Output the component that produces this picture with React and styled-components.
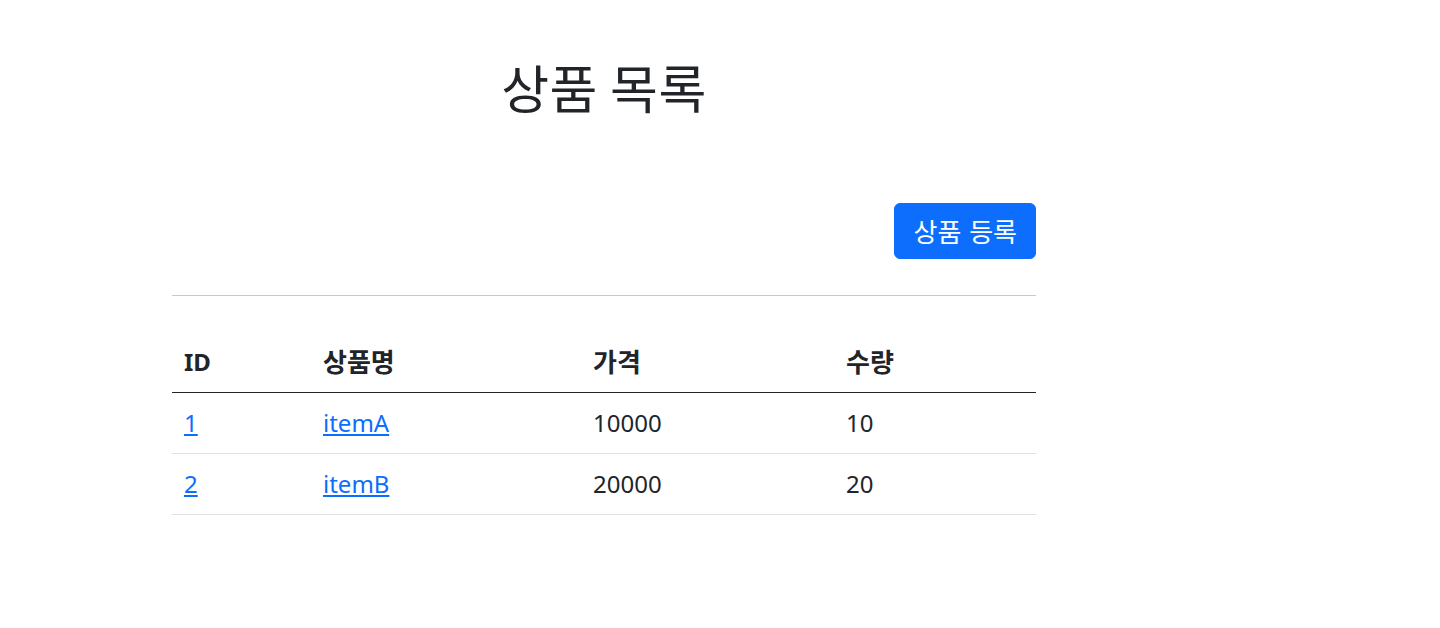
import React from "react";
import styled, { createGlobalStyle } from "styled-components";

const Global = createGlobalStyle`
  html, body { margin: 0; padding: 0; background: #fff; }
  body {
    font-family: "Noto Sans", "Noto Sans CJK KR", sans-serif;
    font-size: 24px;
    line-height: 1.5;
    color: #212529;
  }
  * { box-sizing: border-box; }
`;

const Container = styled.div`
  width: 900px;
  margin-left: 154px;
  padding: 0 18px;
`;

const Header = styled.div`
  padding-top: 58px;
  text-align: center;
`;

const Title = styled.h2`
  margin: 0;
  height: 58px;
  font-size: 52px;
  font-weight: 400;
  line-height: 58px;
  letter-spacing: 0.5px;
  font-family: "Noto Sans CJK KR", sans-serif;
`;

const ButtonRow = styled.div`
  display: flex;
  justify-content: flex-end;
  margin-top: 87px;
`;

const Button = styled.button`
  font-family: "Noto Sans CJK KR", sans-serif;
  font-size: 26px;
  line-height: 36px;
  word-spacing: 2px;
  color: #fff;
  background: #0d6efd;
  border: 1px solid #0d6efd;
  border-radius: 6px;
  padding: 9px 18px;
  cursor: pointer;
`;

const Rule = styled.hr`
  margin: 36px 0;
  border: 0;
  border-top: 1px solid #212529;
  opacity: 0.25;
`;

const Table = styled.table`
  width: 100%;
  border-collapse: collapse;
  table-layout: fixed;
`;

const Th = styled.th`
  text-align: left;
  font-weight: 700;
  font-family: "Noto Sans", "Noto Sans CJK KR", sans-serif;
  font-size: ${(p) => (p.$ko ? 26 : 24)}px;
  padding: 12px 12px;
  line-height: 36px;
  border-bottom: 1px solid #212529;
  width: ${(p) => p.$w}px;
`;

const Td = styled.td`
  padding: 12px 12px;
  line-height: 36px;
  border-bottom: 1px solid #dee2e6;
`;

const Link = styled.a`
  color: #0d6efd;
  text-decoration: underline;
`;

const items = [
  { id: 1, name: "itemA", price: 10000, qty: 10 },
  { id: 2, name: "itemB", price: 20000, qty: 20 },
];

export default function App() {
  return (
    <>
      <Global />
      <Container>
        <Header>
          <Title>상품 목록</Title>
        </Header>
        <ButtonRow>
          <Button type="button">상품 등록</Button>
        </ButtonRow>
        <Rule />
        <Table>
          <thead>
            <tr>
              <Th $w={139}>ID</Th>
              <Th $w={270} $ko>상품명</Th>
              <Th $w={253} $ko>가격</Th>
              <Th $w={202} $ko>수량</Th>
            </tr>
          </thead>
          <tbody>
            {items.map((it) => (
              <tr key={it.id}>
                <Td>
                  <Link href="#">{it.id}</Link>
                </Td>
                <Td>
                  <Link href="#">{it.name}</Link>
                </Td>
                <Td>{it.price}</Td>
                <Td>{it.qty}</Td>
              </tr>
            ))}
          </tbody>
        </Table>
      </Container>
    </>
  );
}
